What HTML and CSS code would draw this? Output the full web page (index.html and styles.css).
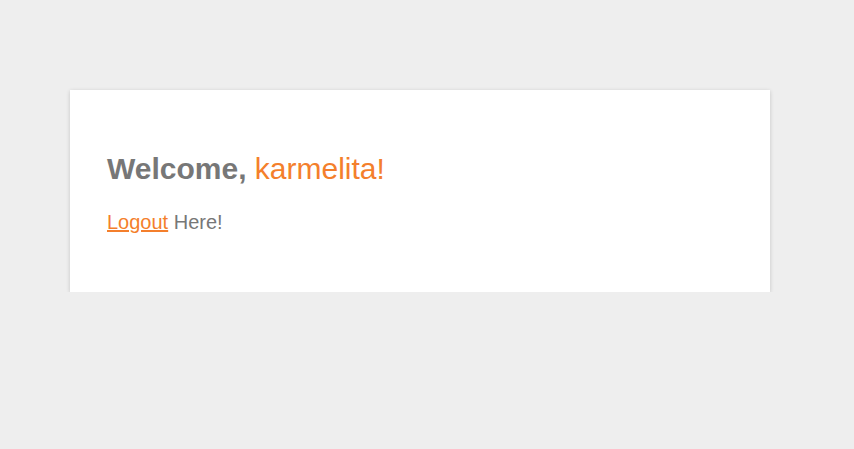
FILE: index.html
```html
<!DOCTYPE html>
<html>
<head>
<meta charset="utf-8">
<link rel="stylesheet" href="styles.css">
</head>
<body>
<div class="page">
  <div class="card">
    <h1 class="welcome"><span class="lead">Welcome,</span> <span class="name">karmelita!</span></h1>
    <p class="logout"><a href="#" class="logout-link">Logout</a> Here!</p>
  </div>
</div>
</body>
</html>
```
FILE: styles.css
```css
html, body {
  margin: 0;
  padding: 0;
  background: #eeeeee;
  font-family: "Liberation Sans", Arial, sans-serif;
}
.page {
  padding: 90px 0 0 70px;
}
.card {
  box-sizing: border-box;
  width: 700px;
  height: 202px;
  background: #ffffff;
  padding: 37px;
  box-shadow: 0 1px 4px rgba(0, 0, 0, 0.18);
}
.welcome {
  margin: 24px 0 0;
  font-size: 30px;
  line-height: 36px;
  font-weight: normal;
  color: #777777;
}
.lead {
  font-weight: bold;
}
.name {
  color: #f47f2c;
}
.logout {
  margin: 23px 0 0;
  font-size: 20px;
  line-height: 24px;
  color: #777777;
}
.logout-link {
  color: #f47f2c;
  text-decoration: underline;
}
```
